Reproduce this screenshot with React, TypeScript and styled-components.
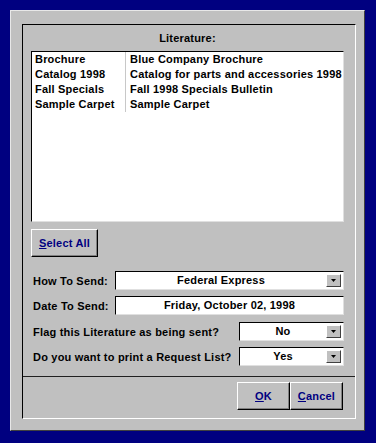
import * as React from 'react';
import styled, { createGlobalStyle } from 'styled-components';

const GlobalStyle = createGlobalStyle`
    body {
        margin: 0;
        background: #000080;
        font-family: "Liberation Sans", Arial, sans-serif;
        font-size: 11px;
        font-weight: bold;
        letter-spacing: 0.2px;
        color: #000;
    }
`;

const Dialog = styled.div`
    box-sizing: border-box;
    width: 355px;
    height: 421px;
    margin: 10px 0 0 10px;
    padding: 13px 8px 11px 11px;
    background: #c0c0c0;
    border-top: 1px solid #e8e8e8;
    border-left: 1px solid #e8e8e8;
    border-right: 1px solid #404040;
    border-bottom: 1px solid #404040;
`;

const Frame = styled.div`
    box-sizing: border-box;
    width: 334px;
    height: 395px;
    display: flex;
    flex-direction: column;
    border-top: 1px solid #000;
    border-left: 1px solid #000;
    border-right: 1px solid #fff;
    border-bottom: 1px solid #fff;
`;

const Content = styled.div`
    display: flex;
    flex-direction: column;
    height: 351px;
    box-sizing: border-box;
    padding: 7px 11px 10px 8px;
`;

const Title = styled.div`
    height: 13px;
    line-height: 13px;
    text-align: center;
`;

const ListBox = styled.div`
    box-sizing: border-box;
    margin-top: 6px;
    height: 171px;
    background: #fff;
    border-top: 1px solid #000;
    border-left: 1px solid #000;
    border-right: 1px solid #e0e0e0;
    border-bottom: 1px solid #e0e0e0;
    display: grid;
    grid-template-columns: 94px 1fr;
    grid-auto-rows: 15px;
    align-content: start;
    overflow: hidden;
`;

const Cell = styled.div<{ $first?: boolean }>`
    line-height: 15px;
    white-space: nowrap;
    overflow: hidden;
    padding-left: ${p => (p.$first ? '3px' : '4px')};
    border-right: ${p => (p.$first ? '1px solid #c8c8c8' : 'none')};
`;

const Button = styled.button<{ $width: number }>`
    box-sizing: border-box;
    width: ${p => p.$width}px;
    height: 28px;
    padding: 0;
    background: #c0c0c0;
    font-family: inherit;
    font-size: 11px;
    font-weight: bold;
    letter-spacing: 0.2px;
    color: #000080;
    border-top: 1px solid #fff;
    border-left: 1px solid #fff;
    border-right: 1px solid #000;
    border-bottom: 1px solid #000;
    box-shadow: inset -1px -1px 0 #808080;
    text-align: center;

    u {
        text-decoration: underline;
    }
`;

const SelectAllRow = styled.div`
    margin-top: 7px;
    margin-bottom: 14px;
`;

const FormRow = styled.div<{ $gap: number }>`
    display: flex;
    align-items: center;
    justify-content: space-between;
    height: 19px;
    margin-top: ${p => p.$gap}px;
`;

const Label = styled.span`
    padding-left: 2px;
    white-space: nowrap;
`;

const Field = styled.div<{ $width: number }>`
    box-sizing: border-box;
    width: ${p => p.$width}px;
    height: 19px;
    display: flex;
    align-items: center;
    background: #fff;
    border-top: 1px solid #000;
    border-left: 1px solid #000;
    border-right: 1px solid #e0e0e0;
    border-bottom: 1px solid #e0e0e0;
`;

const FieldText = styled.div`
    flex: 1;
    text-align: center;
    white-space: nowrap;
    line-height: 17px;
`;

const DropButton = styled.div`
    box-sizing: border-box;
    width: 15px;
    height: 13px;
    margin-right: 2px;
    background: #c0c0c0;
    border-top: 1px solid #fff;
    border-left: 1px solid #fff;
    border-right: 1px solid #404040;
    border-bottom: 1px solid #404040;
    display: flex;
    align-items: center;
    justify-content: center;
`;

const Footer = styled.div`
    flex: 1;
    border-top: 1px solid #202020;
    display: flex;
    justify-content: flex-end;
    align-items: flex-start;
    padding: 5px 12px 0 0;
`;

const rows = [
    ['Brochure', 'Blue Company Brochure'],
    ['Catalog 1998', 'Catalog for parts and accessories 1998'],
    ['Fall Specials', 'Fall 1998 Specials Bulletin'],
    ['Sample Carpet', 'Sample Carpet'],
];

const Arrow = () => (
    <svg width="5" height="3" viewBox="0 0 5 3">
        <path d="M0 0 H5 L2.5 3 Z" fill="#000" />
    </svg>
);

const Combo = ({ width, value }: { width: number; value: string }) => (
    <Field $width={width}>
        <FieldText>{value}</FieldText>
        <DropButton><Arrow /></DropButton>
    </Field>
);

const App = () => {
    return (
        <>
            <GlobalStyle />
            <Dialog>
                <Frame>
                    <Content>
                        <Title>Literature:</Title>
                        <ListBox>
                            {rows.map(([name, desc]) => (
                                <React.Fragment key={name}>
                                    <Cell $first>{name}</Cell>
                                    <Cell>{desc}</Cell>
                                </React.Fragment>
                            ))}
                        </ListBox>
                        <SelectAllRow>
                            <Button $width={67}><u>S</u>elect All</Button>
                        </SelectAllRow>
                        <FormRow $gap={0}>
                            <Label>How To Send:</Label>
                            <Combo width={229} value="Federal Express" />
                        </FormRow>
                        <FormRow $gap={6}>
                            <Label>Date To Send:</Label>
                            <Field $width={229}>
                                <FieldText>Friday, October 02, 1998</FieldText>
                            </Field>
                        </FormRow>
                        <FormRow $gap={7}>
                            <Label>Flag this Literature as being sent?</Label>
                            <Combo width={105} value="No" />
                        </FormRow>
                        <FormRow $gap={6}>
                            <Label>Do you want to print a Request List?</Label>
                            <Combo width={105} value="Yes" />
                        </FormRow>
                    </Content>
                    <Footer>
                        <Button $width={53}><u>O</u>K</Button>
                        <Button $width={53}><u>C</u>ancel</Button>
                    </Footer>
                </Frame>
            </Dialog>
        </>
    );
};

export default App;
